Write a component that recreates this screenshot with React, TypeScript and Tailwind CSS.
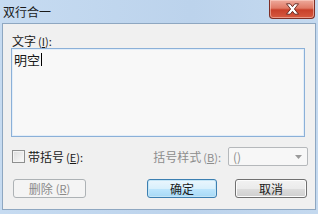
import React from 'react';

const FONT = { fontFamily: '"Noto Sans CJK SC", "Microsoft YaHei", sans-serif' };

const CloseGlyph: React.FC = () => (
  <svg width="15" height="12" viewBox="0 0 15 12" aria-hidden="true">
    <path
      d="M1.5 0.8 L5.2 0.8 L7.5 3.7 L9.8 0.8 L13.5 0.8 L9.4 6 L13.5 11.2 L9.8 11.2 L7.5 8.3 L5.2 11.2 L1.5 11.2 L5.6 6 Z"
      fill="#ffffff"
      stroke="#5e231c"
      strokeWidth="0.9"
      strokeLinejoin="round"
    />
  </svg>
);

const WinButton: React.FC<{ label: string; hotkey?: string; kind?: 'normal' | 'default' | 'disabled'; className?: string }> = ({
  label,
  hotkey,
  kind = 'normal',
  className = '',
}) => {
  const base = 'h-[19px] rounded-[3px] border flex items-center justify-center text-[12px] leading-none';
  const look =
    kind === 'disabled'
      ? 'border-[#adb2b5] bg-[#f4f4f4] text-[#8a8a8a]'
      : kind === 'default'
      ? 'border-[#3c7fb1] bg-[linear-gradient(#eaf6fd_0%,#d9f0fc_50%,#bee6fd_51%,#a7d9f5_100%)] text-[#1a1a1a] shadow-[inset_0_0_0_1px_#c4e5f6]'
      : 'border-[#707070] bg-[linear-gradient(#f2f2f2_0%,#ebebeb_50%,#dddddd_51%,#cfcfcf_100%)] text-[#1a1a1a] shadow-[inset_0_0_0_1px_#fcfcfc]';
  return (
    <div className={`${base} ${look} ${className}`}>
      <span>{label}</span>
      {hotkey && (
        <span className="ml-[3px] text-[11px]">
          (<span className="underline">{hotkey}</span>)
        </span>
      )}
    </div>
  );
};

export default function App() {
  return (
    <div className="w-[318px] h-[214px] overflow-hidden bg-[linear-gradient(90deg,#c6dbf1,#bcd3ec_60%,#c4d9ef)] flex flex-col px-[2px] pb-[4px]" style={FONT}>
      {/* title bar */}
      <div className="h-[23px] flex items-start shrink-0">
        <div className="pl-[1px] pt-[4px] text-[12px] leading-[15px] text-[#1a1a1a]">双行合一</div>
        <div className="ml-auto mr-[1px] w-[46px] h-[19px] rounded-b-[4px] border border-t-0 border-[#7e2e25] bg-[linear-gradient(#eeaa9c_0%,#e07a66_45%,#c8402a_55%,#d65a40_100%)] shadow-[inset_0_0_0_1px_rgba(255,220,210,0.5)] flex items-center justify-center">
          <CloseGlyph />
        </div>
      </div>

      {/* client area */}
      <div className="flex-1 border border-[#8ea7c1] bg-[#f0f0f0] flex flex-col pl-[8px] text-[#1a1a1a]">
        <div className="mt-[9px] ml-[1px] h-[15px] text-[12px] leading-[15px]">
          文字<span className="text-[11px] ml-[2px]">(<span className="underline">I</span>):</span>
        </div>

        <div className="w-[294px] h-[89px] border border-[#8bb0d8] bg-[#f8f8f8] shadow-[inset_0_0_0_1px_#e3eef9] pl-[2px] pt-[3px]">
          <div className="flex items-center h-[15px] text-[13px] leading-[15px]">
            <span>明空</span>
            <span className="w-[1px] h-[13px] bg-black ml-[1px]" />
          </div>
        </div>

        <div className="mt-[10px] h-[19px] flex items-center pr-[7px]">
          <div className="ml-[1px] w-[13px] h-[13px] border border-[#8e8f8f] bg-[linear-gradient(135deg,#dcdcdc,#fbfbfb)] shadow-[inset_0_0_0_1px_#f4f4f4]" />
          <div className="ml-[3px] text-[12px] leading-[15px]">
            带括号<span className="text-[11px] ml-[2px]">(<span className="underline">E</span>):</span>
          </div>
          <div className="ml-auto mr-[7px] text-[12px] leading-[15px] text-[#8d8d8d]">
            括号样式<span className="text-[11px] ml-[2px]">(<span className="underline">B</span>):</span>
          </div>
          <div className="w-[80px] h-[19px] rounded-[2px] border border-[#b5b8bb] bg-[#f7f7f7] flex items-center pl-[4px] pr-[5px]">
            <span className="text-[12px] leading-none text-[#8d8d8d]">()</span>
            <svg className="ml-auto" width="7" height="4" viewBox="0 0 7 4" aria-hidden="true">
              <path d="M0 0 L7 0 L3.5 4 Z" fill="#9a9a9a" />
            </svg>
          </div>
        </div>

        <div className="mt-[13px] flex items-center">
          <WinButton label="删除" hotkey="R" kind="disabled" className="ml-[2px] w-[73px]" />
          <WinButton label="确定" kind="default" className="ml-[61px] w-[70px]" />
          <WinButton label="取消" className="ml-[18px] w-[72px]" />
        </div>
      </div>
    </div>
  );
}
